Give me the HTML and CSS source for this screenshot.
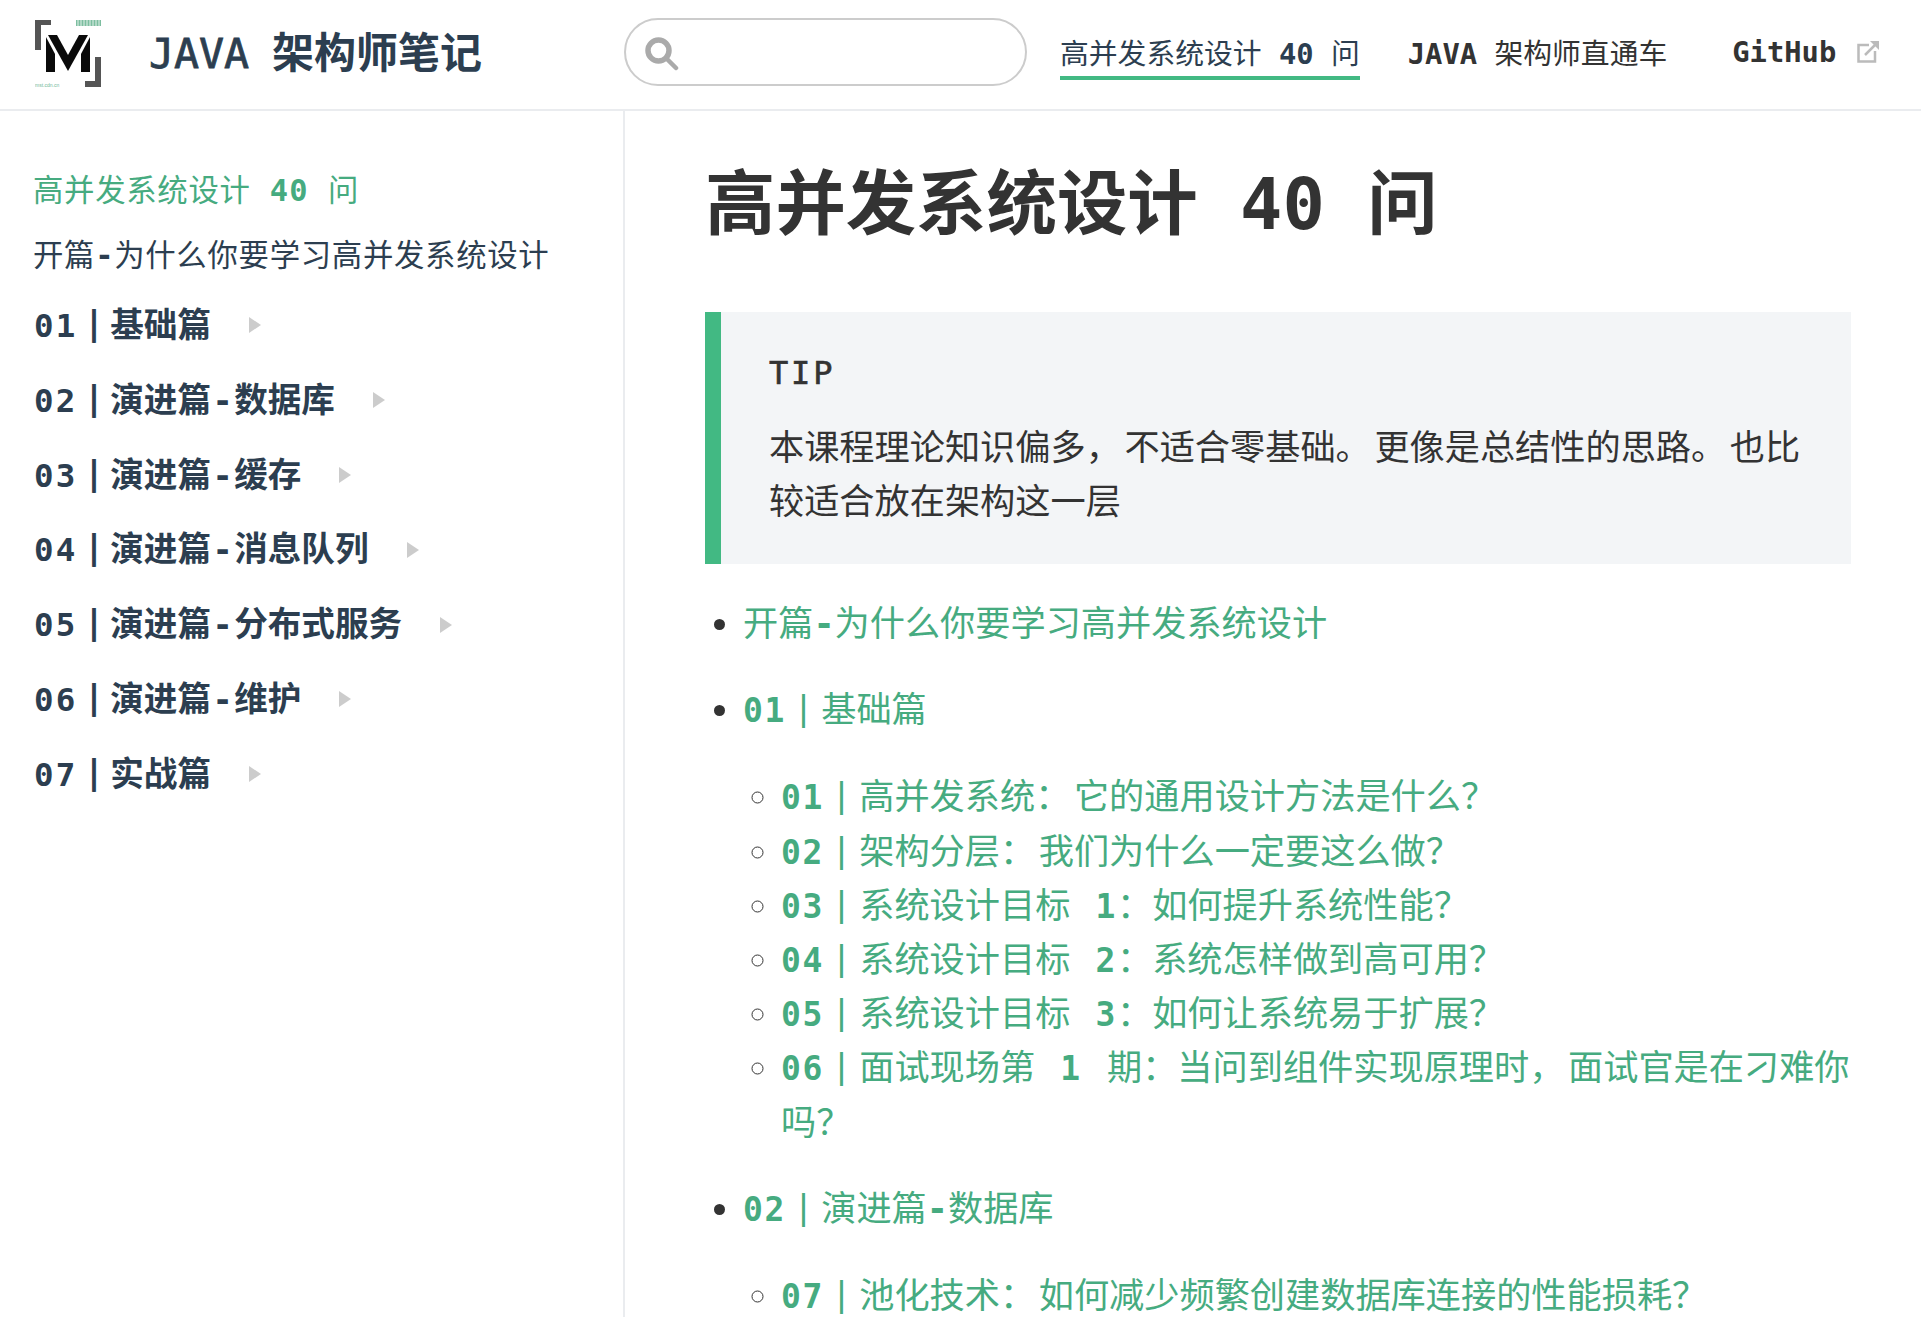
FILE: index.html
```html
<!DOCTYPE html>
<html lang="zh">
<head>
<meta charset="utf-8">
<title>高并发系统设计 40 问</title>
<link rel="stylesheet" href="styles.css">
</head>
<body>
<header class="navbar">
  <a class="brand">
    <svg class="logo" viewBox="0 0 66 67" width="66" height="67">
      <path d="M0 0H16V5H6V30H0Z" fill="#555"/>
      <path d="M60 37H66V67H50V61H60Z" fill="#555"/>
      <path d="M41 0H66V6H41Z" fill="#6fb796" opacity=".9"/>
      <path d="M43 0V6M46 0V6M49 0V6M52 0V6M55 0V6M58 0V6M61 0V6M64 0V6" stroke="#fff" stroke-width=".8"/>
      <path d="M11 17L20 34V52H11Z" fill="#0a0a0a"/>
      <path d="M13 15H22L33 35V51Z" fill="#0a0a0a"/>
      <path d="M55 17L46 34V52H55Z" fill="#0a0a0a"/>
      <path d="M53 15H44L33 35V51Z" fill="#0a0a0a"/>
      <text class="logo-text" x="0" y="67">mst.cdn.cn</text>
    </svg>
    <span class="site-name"><span class="latin">JAVA</span> 架构师笔记</span>
  </a>
  <div class="search"><svg class="search-icon" viewBox="0 0 34 34" width="34" height="34"><circle cx="13.5" cy="13.5" r="10.5" fill="none" stroke="#aaa" stroke-width="5.5"/><path d="M21 21l10 10" stroke="#aaa" stroke-width="4.5" stroke-linecap="round"/></svg></div>
  <nav class="nav">
    <a class="nav-link active">高并发系统设计 <span class="strong">40</span> 问</a>
    <a class="nav-link dark"><span class="strong">JAVA</span> 架构师直通车</a>
    <a class="nav-link dark github"><span class="strong">GitHub</span><svg class="ext" viewBox="0 0 22 22" width="22" height="22"><path d="M12 4H1.5V20.5H18V10" fill="none" stroke="#bbb" stroke-width="2.5"/><path d="M8 14L19 3" fill="none" stroke="#bbb" stroke-width="2.5"/><path d="M13 0H22V9Z" fill="#bbb"/></svg></a>
  </nav>
</header>
<div class="layout">
  <aside class="sidebar">
    <a class="side-top active">高并发系统设计 <b>40</b> 问</a>
    <a class="side-top">开篇<span class="dash">-</span>为什么你要学习高并发系统设计</a>
    <ul class="groups">
      <li><span><b>01</b><i class="bar">|</i>基础篇</span><i class="arrow"></i></li>
      <li><span><b>02</b><i class="bar">|</i>演进篇<span class="dash">-</span>数据库</span><i class="arrow"></i></li>
      <li><span><b>03</b><i class="bar">|</i>演进篇<span class="dash">-</span>缓存</span><i class="arrow"></i></li>
      <li><span><b>04</b><i class="bar">|</i>演进篇<span class="dash">-</span>消息队列</span><i class="arrow"></i></li>
      <li><span><b>05</b><i class="bar">|</i>演进篇<span class="dash">-</span>分布式服务</span><i class="arrow"></i></li>
      <li><span><b>06</b><i class="bar">|</i>演进篇<span class="dash">-</span>维护</span><i class="arrow"></i></li>
      <li><span><b>07</b><i class="bar">|</i>实战篇</span><i class="arrow"></i></li>
    </ul>
  </aside>
  <main class="content">
    <h1>高并发系统设计 40 问</h1>
    <div class="tip">
      <p class="tip-title">TIP</p>
      <p>本课程理论知识偏多<span class="p">，</span>不适合零基础<span class="p">。</span>更像是总结性的思路<span class="p">。</span>也比较适合放在架构这一层</p>
    </div>
    <ul class="toc">
      <li><a>开篇<span class="dash">-</span>为什么你要学习高并发系统设计</a></li>
      <li><a><b>01</b><i class="bar">|</i>基础篇</a>
        <ul>
          <li><a><b>01</b><i class="bar">|</i>高并发系统<span class="p">：</span>它的通用设计方法是什么？</a></li>
          <li><a><b>02</b><i class="bar">|</i>架构分层<span class="p">：</span>我们为什么一定要这么做？</a></li>
          <li><a><b>03</b><i class="bar">|</i>系统设计目标 <b class="step">1</b>：如何提升系统性能？</a></li>
          <li><a><b>04</b><i class="bar">|</i>系统设计目标 <b class="step">2</b>：系统怎样做到高可用？</a></li>
          <li><a><b>05</b><i class="bar">|</i>系统设计目标 <b class="step">3</b>：如何让系统易于扩展？</a></li>
          <li><a><b>06</b><i class="bar">|</i>面试现场第 <b class="step issue">1</b> 期：当问到组件实现原理时<span class="p">，</span>面试官是在刁难你吗？</a></li>
        </ul>
      </li>
      <li><a><b>02</b><i class="bar">|</i>演进篇<span class="dash">-</span>数据库</a>
        <ul>
          <li><a><b>07</b><i class="bar">|</i>池化技术<span class="p">：</span>如何减少频繁创建数据库连接的性能损耗？</a></li>
        </ul>
      </li>
    </ul>
  </main>
</div>
</body>
</html>
```
FILE: styles.css
```css
* { box-sizing: border-box; }
html, body { margin: 0; height: 100%; overflow: hidden; }
body { font-family: "DejaVu Sans Mono", "Noto Sans CJK SC", monospace; color: #333; background: #fff; font-size: 35.2px; }
.navbar { height: 111px; border-bottom: 2px solid #eaecef; display: flex; align-items: center; padding: 0 0 5px 35px; }
.brand { display: flex; align-items: center; width: 589px; }
.logo { margin: 3px 48px 0 0; flex: none; }
.logo-text { font: 5px "Liberation Sans", sans-serif; fill: #6fb796; }
.site-name { font-size: 42px; font-weight: 700; color: #2c3e50; padding-bottom: 5px; word-spacing: -2.5px; }
.site-name .latin { font-size: 41.6px; font-weight: 400; -webkit-text-stroke: .8px #2c3e50; }
.search { width: 403px; height: 68px; border: 2px solid #ccc; border-radius: 34px; display: flex; align-items: center; padding: 3px 0 0 19px; }
.nav { display: flex; margin-left: 33px; gap: 48px; font-size: 28.8px; }
.nav-link { padding: 7px 0 4px; border-bottom: 4px solid transparent; white-space: nowrap; color: #2c3e50; }
.nav-link.dark { color: #333; }
.nav-link.active { border-color: #42b983; }
.nav-link.github { margin-left: 17px; display: flex; align-items: center; }
.strong { font-weight: 700; }
.ext { margin-left: 21px; }
.layout { display: flex; height: 1206px; }
.sidebar { width: 625px; border-right: 2px solid #eaecef; padding-top: 47px; flex: none; }
.side-top { display: block; padding-left: 33px; font-size: 30.4px; line-height: 65px; color: #2c3e50; letter-spacing: .7px; }
.side-top.active { color: #46ab80; }
.side-top b { letter-spacing: 1.4px; line-height: 0; }
.dash { font-weight: 700; }
.groups { list-style: none; margin: 1px 0 0; padding: 0 0 0 34px; }
.groups li { font-weight: 700; font-size: 33.6px; line-height: 74.8px; display: flex; align-items: center; color: #2c3e50; }
.groups b { font-size: 32.5px; letter-spacing: 2.3px; line-height: 0; }
.groups .dash { padding-left: 1.5px; letter-spacing: 1.5px; }
.bar { font-style: normal; font-size: 34px; line-height: 0; padding: 0 6px; vertical-align: 2px; letter-spacing: 0; }
.arrow { width: 0; height: 0; border-left: 12px solid #ccc; border-top: 8px solid transparent; border-bottom: 8px solid transparent; margin: -2px 0 0 38px; }
.content { flex: 1; padding: 0 70px 0 80px; }
h1 { font-size: 70.4px; margin: 50px 0 63px; line-height: 88px; font-weight: 700; }
.tip { background: #f3f5f7; border-left: 16px solid #42b983; padding: 34px 48px 35px; }
.tip p { margin: 0; line-height: 54px; }
.tip-title { font-size: 32px; letter-spacing: 2.8px; -webkit-text-stroke: .6px #333; margin-bottom: 21px !important; }
.p { padding-right: 3.6px; }
.toc { margin: 33px 0 0; padding: 0 0 0 38px; line-height: 54.2px; }
.toc > li { margin-bottom: 32px; }
.toc a { color: #46ab80; }
.toc b { font-size: 33px; line-height: 0; letter-spacing: 1.6px; }
.toc .step { margin-left: 4px; }
.toc .issue { margin-right: 4px; }
.toc .bar { padding: 0 7.4px; }
.toc ul { margin: 33px 0 0; padding-left: 38px; }
```
